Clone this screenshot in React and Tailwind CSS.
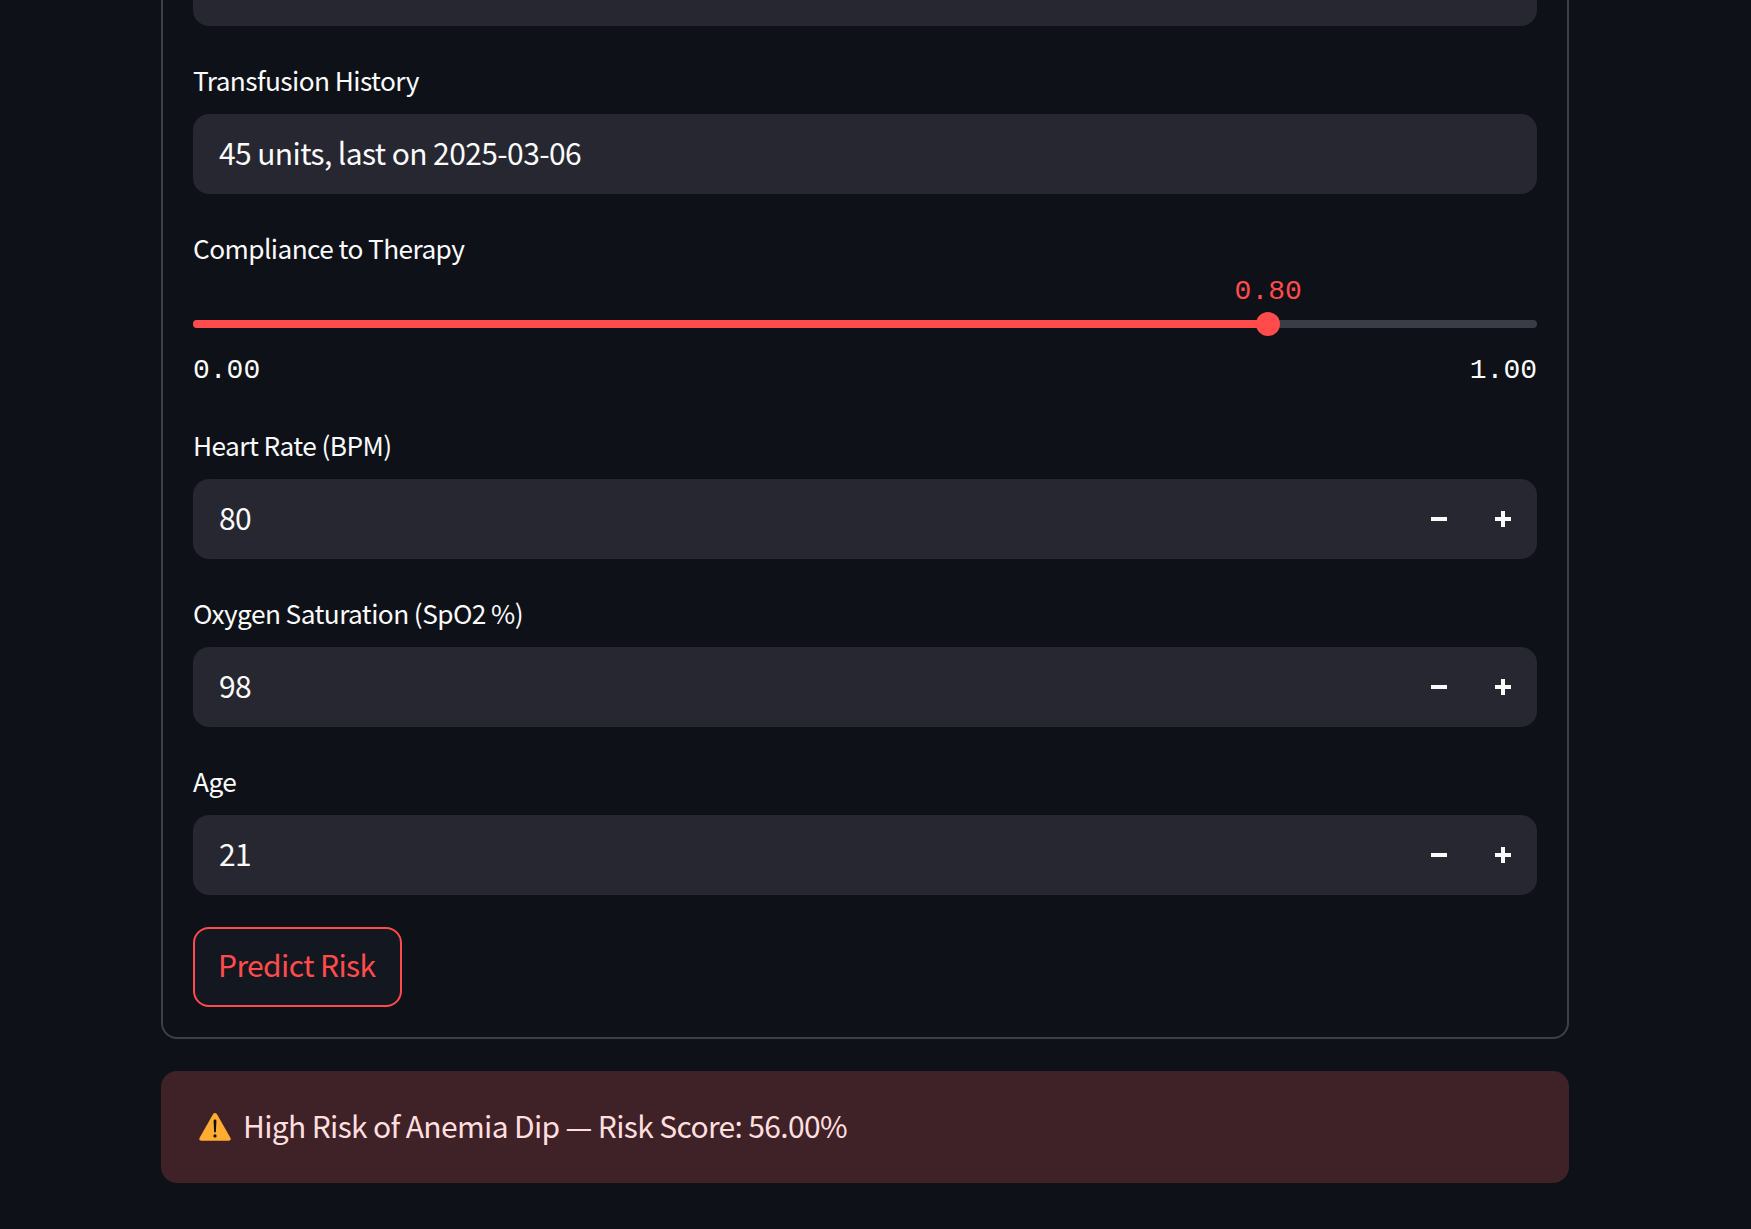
const sans = "font-['Noto_Sans_CJK_SC','Noto_Sans',sans-serif]";

const Label = ({ children }) => (
  <div className="pt-9 mb-3">
    <div className="h-10 leading-[36px] text-[26.25px] tracking-[-0.58px] text-[#fafafa]">{children}</div>
  </div>
);

const NumberField = ({ label, value }) => (
  <div>
    <Label>{label}</Label>
    <div className="h-20 rounded-2xl bg-[#262730] flex items-center pl-[26px] text-[30px] tracking-[-0.6px] text-[#fafafa]">
      <span className="flex-1 pb-1">{value}</span>
      {/* step buttons */}
      <div className="flex items-center pr-[26px] gap-12">
        <svg width="16" height="16" viewBox="0 0 16 16" className="fill-[#fafafa]">
          <rect x="0" y="6" width="16" height="4" />
        </svg>
        <svg width="16" height="16" viewBox="0 0 16 16" className="fill-[#fafafa]">
          <rect x="0" y="6" width="16" height="4" />
          <rect x="6" y="0" width="4" height="16" />
        </svg>
      </div>
    </div>
  </div>
);

const App = () => {
  return (
    <div className={`h-[1229px] overflow-hidden bg-[#0e1117] ${sans}`}>
      <div className="w-[1408px] ml-[161px]">
        {/* Form */}
        <div className="border-x-2 border-b-2 border-[#3d4044] rounded-b-2xl px-[30px] pb-[30px]">
          <div className="h-[26px] rounded-b-2xl bg-[#262730]" />

          <Label>Transfusion History</Label>
          <div className="h-20 rounded-2xl bg-[#262730] flex items-center px-[26px] pb-1 text-[30px] tracking-[-0.6px] text-[#fafafa]">
            45 units, last on 2025-03-06
          </div>

          {/* Slider */}
          <Label>Compliance to Therapy</Label>
          <div className="h-[121px] -mt-3 font-['Liberation_Mono',monospace] text-[28px]">
            <div className="relative pt-[50px]">
              <div className="flex h-2 rounded-full overflow-hidden bg-[#3a3c46]">
                <div className="w-[80%] bg-[#ff4b4b]" />
              </div>
              <div className="absolute top-[42px] left-[80%] -ml-3 w-6 h-6 rounded-full bg-[#ff4b4b]" />
              <div className="absolute top-[2px] left-[80%] -translate-x-1/2 leading-10 text-[#ff4b4b]">0.80</div>
            </div>
            <div className="flex justify-between mt-[23px] leading-10 text-[#fafafa]">
              <span>0.00</span>
              <span>1.00</span>
            </div>
          </div>

          <NumberField label="Heart Rate (BPM)" value="80" />
          <NumberField label="Oxygen Saturation (SpO2 %)" value="98" />
          <NumberField label="Age" value="21" />

          <button className="block mt-8 h-20 pl-[23px] pr-[25px] pb-[6px] rounded-2xl border-2 border-[#ff4b4b] bg-[#13171f] text-[30px] tracking-[-0.6px] text-[#ff4b4b]">
            Predict Risk
          </button>
        </div>

        {/* Alert */}
        <div className="mt-8 h-28 rounded-2xl bg-[#3e2228] flex items-center pl-[38px] text-[30px] tracking-[-0.65px] text-[#ffdede]">
          <svg width="32" height="32" viewBox="0 0 36 36" className="mr-[12px]">
            <path
              d="M2.7 33.5C.6 33.5-.3 32 .7 30.2L15.9 3.5c1-1.8 3.1-1.8 4.2 0l15.2 26.7c1 1.8.1 3.3-2 3.3H2.7z"
              fill="#ffac33"
            />
            <path d="M16.4 11.2a1.6 1.6 0 0 1 3.2 0l-.6 12a1 1 0 0 1-2 0l-.6-12z" fill="#111" />
            <circle cx="18" cy="28" r="1.8" fill="#111" />
          </svg>
          <span className="pb-1">High Risk of Anemia Dip — Risk Score: 56.00%</span>
        </div>
      </div>
    </div>
  );
};

export default App;
